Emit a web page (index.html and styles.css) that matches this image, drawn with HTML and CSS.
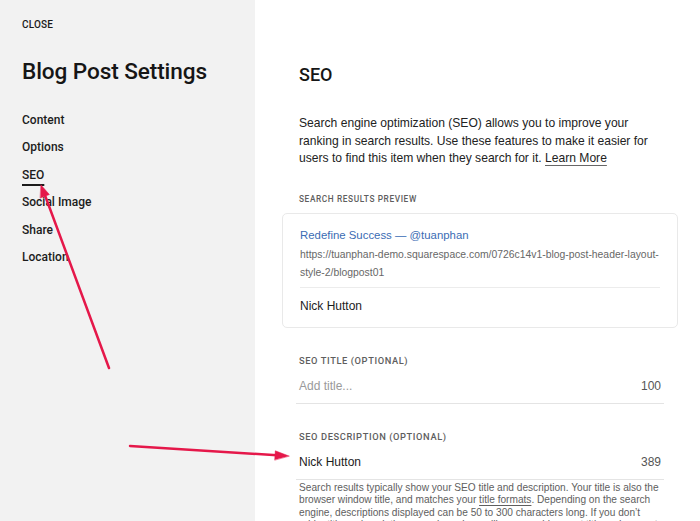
FILE: index.html
```html
<!DOCTYPE html>
<html lang="en">
<head>
<meta charset="utf-8">
<title>Blog Post Settings</title>
<link rel="stylesheet" href="styles.css">
</head>
<body>
<div class="panel">
  <aside class="sidebar">
    <div class="close">CLOSE</div>
    <h1 class="sidebar-title">Blog Post Settings</h1>
    <nav class="nav">
      <a class="nav-item">Content</a>
      <a class="nav-item">Options</a>
      <a class="nav-item active">SEO</a>
      <a class="nav-item">Social Image</a>
      <a class="nav-item">Share</a>
      <a class="nav-item">Location</a>
    </nav>
  </aside>

  <main class="main">
    <h2 class="section-title">SEO</h2>
    <p class="intro">Search engine optimization (SEO) allows you to improve your ranking in search results. Use these features to make it easier for users to find this item when they search for it. <a class="link">Learn More</a></p>

    <div class="label preview-label">SEARCH RESULTS PREVIEW</div>
    <div class="preview-card">
      <div class="preview-title">Redefine Success — @tuanphan</div>
      <div class="preview-url">https://tuanphan-demo.squarespace.com/0726c14v1-blog-post-header-layout-style-2/blogpost01</div>
      <div class="preview-desc">Nick Hutton</div>
    </div>

    <div class="label field-label">SEO TITLE (OPTIONAL)</div>
    <div class="field">
      <span class="field-value placeholder">Add title...</span>
      <span class="field-count">100</span>
    </div>

    <div class="label field-label">SEO DESCRIPTION (OPTIONAL)</div>
    <div class="field">
      <span class="field-value">Nick Hutton</span>
      <span class="field-count">389</span>
    </div>
    <p class="help">Search results typically show your SEO title and description. Your title is also the browser window title, and matches your <a class="link-muted">title formats</a>. Depending on the search engine, descriptions displayed can be 50 to 300 characters long. If you don’t <span class="nowrap">add a</span> title or description, search engines will use your blog post title and excerpt.</p>
  </main>
</div>

<svg class="annotations" width="700" height="521" viewBox="0 0 700 521" aria-hidden="true">
  <g fill="#e5184a" stroke="#e5184a" stroke-linecap="round">
    <line x1="109" y1="368" x2="44.5" y2="194" stroke-width="2.5"/>
    <polygon points="41,185 49.4,194.5 40.4,198" stroke-width="0.5"/>
    <line x1="130" y1="446" x2="277" y2="455.2" stroke-width="2.5"/>
    <polygon points="289,456 275.3,450.8 274.7,459.8" stroke-width="0.5"/>
  </g>
</svg>
</body>
</html>
```

FILE: styles.css
```css
* {
  box-sizing: border-box;
}

html,
body {
  margin: 0;
  height: 100%;
  overflow: hidden;
}

body {
  font-family: "Liberation Sans", Arial, sans-serif;
  color: #1c1c1c;
  background: #ffffff;
  position: relative;
}

.panel {
  display: flex;
  height: 521px;
}

/* Medium-weight UI type: titles, navigation and field labels */
.close,
.sidebar-title,
.nav,
.section-title,
.label {
  font-family: Roboto, "Liberation Sans", Arial, sans-serif;
}

/* Left navigation column */
.sidebar {
  width: 255px;
  flex: none;
  background: #f2f2f2;
  padding: 19px 22px 0 22px;
}

.close {
  font-size: 10px;
  line-height: 12px;
  font-weight: 500;
  letter-spacing: 0.2px;
  color: #1a1a1a;
}

.sidebar-title {
  margin: 28px 0 0;
  font-size: 22.6px;
  line-height: 26px;
  font-weight: 500;
  letter-spacing: -0.1px;
  color: #161616;
}

.nav {
  margin-top: 27px;
  display: flex;
  flex-direction: column;
  align-items: flex-start;
  gap: 11.4px;
}

.nav-item {
  font-size: 12px;
  line-height: 16px;
  font-weight: 500;
  color: #1c1c1c;
}

.nav-item.active {
  text-decoration: underline;
  text-decoration-thickness: 2px;
  text-underline-offset: 5px;
}

/* Right content column */
.main {
  flex: 1;
  padding: 64px 39px 0 44px;
}

.section-title {
  margin: 0;
  font-size: 18px;
  line-height: 22px;
  font-weight: 500;
  color: #161616;
}

.intro {
  margin: 29px 0 0;
  font-size: 12.1px;
  line-height: 17.5px;
  color: #222;
}

.link {
  color: #222;
  text-decoration: underline;
  text-decoration-color: #666;
  text-underline-offset: 3px;
}

.label {
  font-weight: 500;
  letter-spacing: 0.6px;
  color: #5e5e5e;
}

.preview-label {
  margin-top: 26px;
  font-size: 8.3px;
  line-height: 10px;
}

.preview-card {
  margin: 9px -17px 0 -17px;
  padding: 13px 17px 13px 17px;
  border: 1px solid #e9e9e9;
  border-radius: 5px;
  background: #fff;
}

.preview-title {
  font-size: 11.4px;
  line-height: 16px;
  color: #3b6cb4;
}

.preview-url {
  margin-top: 3px;
  font-size: 10.38px;
  line-height: 18px;
  color: #676767;
  padding-bottom: 5px;
  border-bottom: 1px solid #ececec;
}

.preview-desc {
  margin-top: 10px;
  font-size: 12px;
  line-height: 16px;
  color: #1c1c1c;
}

.field-label {
  margin-top: 27px;
  font-size: 9.3px;
  line-height: 11px;
}

.field {
  margin: 12px -3px 0 -3px;
  padding: 0 3px 9px 3px;
  display: flex;
  justify-content: space-between;
  align-items: baseline;
  border-bottom: 1px solid #e4e4e4;
  font-size: 12px;
  line-height: 16px;
}

.field-value {
  color: #1c1c1c;
}

.field-value.placeholder {
  color: #9a9a9a;
}

.field-count {
  color: #555;
}

.help {
  margin: 2px 0 0;
  font-size: 10.15px;
  line-height: 12.6px;
  color: #5e5e5e;
}

.nowrap {
  white-space: nowrap;
}

.link-muted {
  color: #5e5e5e;
  text-decoration: underline;
  text-underline-offset: 2px;
}

/* Callout arrows drawn over the page */
.annotations {
  position: absolute;
  top: 0;
  left: 0;
  pointer-events: none;
}
```
